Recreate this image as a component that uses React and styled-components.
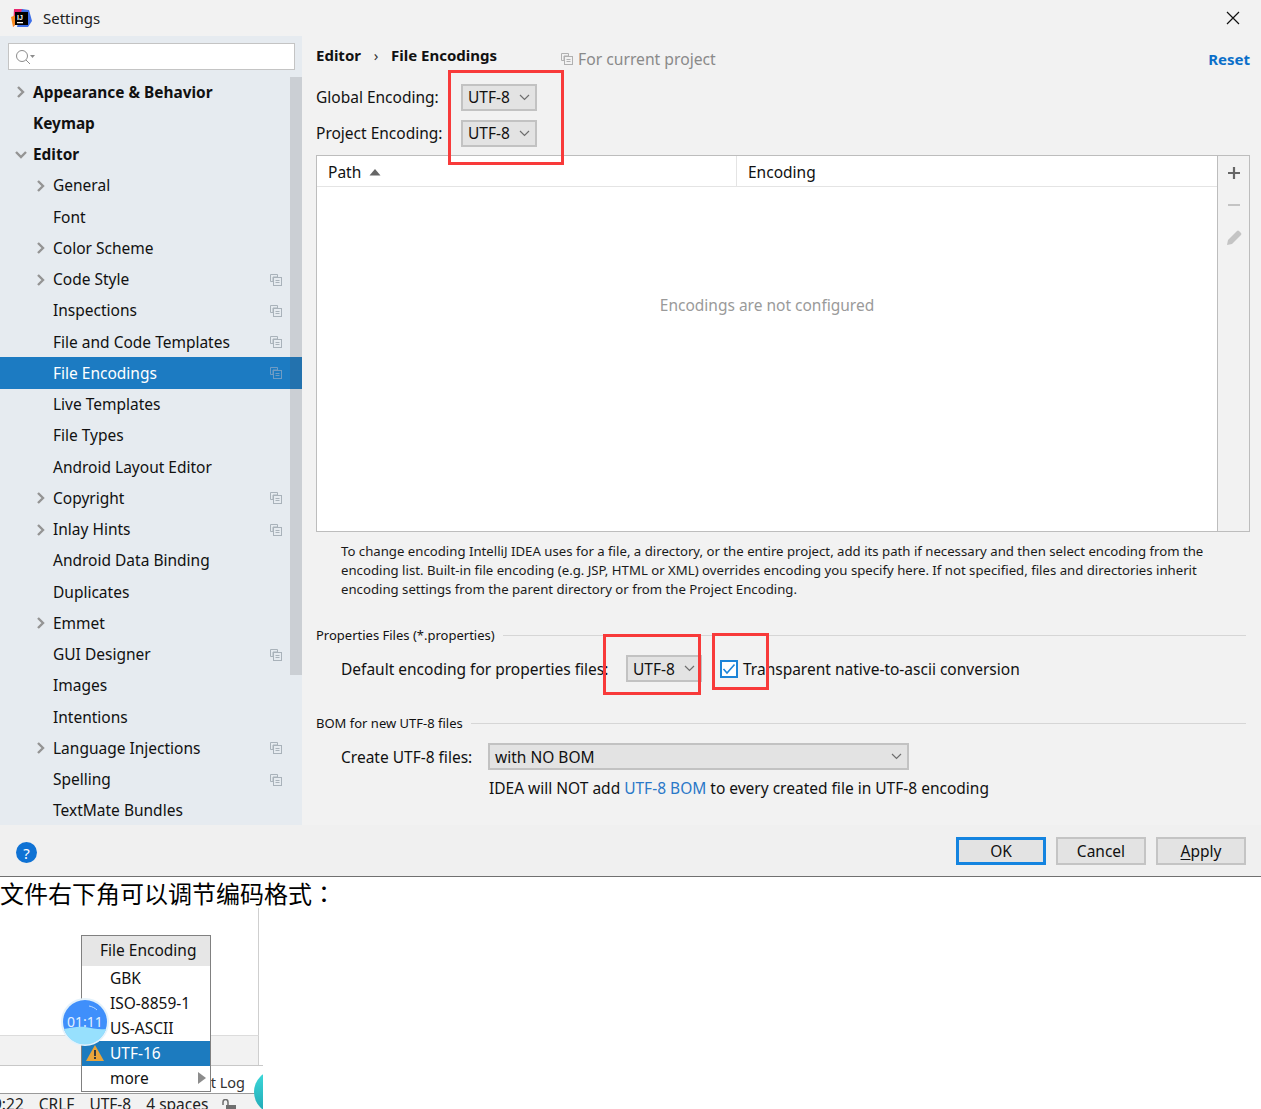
import React from "react";
import styled, { createGlobalStyle } from "styled-components";

const Global = createGlobalStyle`
  html, body {
    margin: 0;
    padding: 0;
    background: #fff;
    overflow: hidden;
  }
  #root {
    width: 1261px;
    height: 1109px;
    overflow: hidden;
  }
  * { box-sizing: border-box; }
`;

const Page = styled.div`
  position: relative;
  width: 1261px;
  height: 1109px;
  font-family: "Noto Sans", "Noto Sans CJK SC", sans-serif;
  font-size: 15.5px;
  color: #111;
`;

const Dialog = styled.div`
  display: flex;
  flex-direction: column;
  height: 877px;
  background: #f2f2f2;
  border-bottom: 1px solid #707070;
`;

const TitleBar = styled.div`
  height: 36px;
  display: flex;
  align-items: center;
  padding: 0 21px 0 11px;
  gap: 11px;
  font-size: 15px;
`;

const TitleText = styled.span`
  flex: 1;
  color: #222;
`;

const Body = styled.div`
  height: 789px;
  display: flex;
`;

const Sidebar = styled.div`
  position: relative;
  width: 302px;
  background: #e6ebf0;
  overflow: hidden;
`;

const SearchBox = styled.div`
  margin: 7px 7px 6px 8px;
  height: 27px;
  background: #fff;
  border: 1px solid #c4c4c4;
  display: flex;
  align-items: center;
  padding-left: 6px;
`;

const Scroll = styled.div`
  position: absolute;
  top: 41px;
  right: 0;
  width: 12px;
  height: 598px;
  background: rgba(70, 70, 80, 0.17);
`;

const TreeRow = styled.div`
  height: 31.25px;
  display: flex;
  align-items: center;
  position: relative;
  padding-left: ${(p) => (p.$level ? 53 : 33)}px;
  padding-top: ${(p) => (p.$level ? 0 : 1)}px;
  font-weight: ${(p) => (p.$level ? 400 : 700)};
  font-size: ${(p) => (p.$level ? 15.5 : 15.4)}px;
  background: ${(p) => (p.$active ? "#1c7bc2" : "transparent")};
  color: ${(p) => (p.$active ? "#fff" : "#111")};
`;

const TreeArrow = styled.svg`
  position: absolute;
  left: ${(p) => (p.$level ? 35 : 15)}px;
  top: 9px;
  width: 12px;
  height: 14px;
`;

const RowCopy = styled.span`
  position: absolute;
  left: 270px;
  top: 10px;
  display: flex;
`;

const Main = styled.div`
  flex: 1;
  padding: 0 11px 0 14px;
  display: flex;
  flex-direction: column;
`;

const Crumbs = styled.div`
  display: flex;
  align-items: center;
  height: 43px;
  padding-bottom: 5px;
  font-size: 15px;
`;

const Crumb = styled.span`
  font-weight: 700;
`;

const CrumbSep = styled.span`
  width: 30px;
  text-align: center;
  color: #333;
`;

const ProjectHint = styled.span`
  margin-left: 64px;
  display: flex;
  align-items: center;
  gap: 5px;
  color: #8a8a8a;
  padding-top: 8px;
  font-size: 15.7px;
`;

const ResetLink = styled.a`
  margin-left: auto;
  color: #0b6fc9;
  font-weight: 700;
  padding-top: 8px;
`;

const EncRow = styled.div`
  display: flex;
  align-items: center;
  height: 36px;
`;

const EncLabel = styled.span`
  width: 145px;
`;

const Combo = styled.div`
  width: ${(p) => p.$w || 76}px;
  height: 27px;
  flex: none;
  background: #e3e3e3;
  border: 2px solid #c2c2c2;
  display: flex;
  align-items: center;
  justify-content: space-between;
  padding: 0 5px 0 5px;
`;

const TablePanel = styled.div`
  margin-top: 4px;
  height: 377px;
  flex: none;
  display: flex;
  border: 1px solid #bdbdbd;
`;

const TableArea = styled.div`
  flex: 1;
  background: #fff;
  display: flex;
  flex-direction: column;
  border-right: 1px solid #bdbdbd;
`;

const TableHead = styled.div`
  height: 31px;
  flex: none;
  display: flex;
  border-bottom: 1px solid #e4e4e4;
`;

const HeadCell = styled.div`
  width: ${(p) => (p.$w ? `${p.$w}px` : "auto")};
  flex: ${(p) => (p.$w ? "none" : 1)};
  padding: 2px 11px 0;
  display: flex;
  align-items: center;
  gap: 8px;
  ${(p) => p.$w && "border-right: 1px solid #e4e4e4;"}
`;

const EmptyNote = styled.div`
  flex: 1;
  display: flex;
  align-items: center;
  justify-content: center;
  color: #9a9a9a;
  padding-bottom: 108px;
`;

const ToolStrip = styled.div`
  width: 31px;
  flex: none;
  display: flex;
  flex-direction: column;
  align-items: center;
  padding-top: 10px;
  gap: 17px;
`;

const HelpText = styled.p`
  margin: 10px 35px 0 25px;
  font-size: 13.2px;
  line-height: 19px;
  color: #1a1a1a;
`;

const GroupTitle = styled.div`
  display: flex;
  align-items: center;
  gap: 8px;
  font-size: 13px;
  margin-top: ${(p) => p.$top}px;
  height: 20px;
  padding-right: 4px;
  &::after {
    content: "";
    flex: 1;
    height: 1px;
    background: #d6d6d6;
  }
`;

const FieldRow = styled.div`
  display: flex;
  align-items: center;
  padding-left: 25px;
  height: 27px;
  margin-top: ${(p) => p.$top}px;
`;

const FieldLabel = styled.span`
  width: ${(p) => p.$w}px;
  flex: none;
  white-space: nowrap;
`;

const CheckBox = styled.span`
  width: 18px;
  height: 18px;
  flex: none;
  background: #fff;
  border: 2px solid #1c84d8;
  display: flex;
  align-items: center;
  justify-content: center;
  margin: 0 5px 0 18px;
`;

const NoteRow = styled.div`
  padding-left: 173px;
  margin-top: 5px;
  height: 26px;
  display: flex;
  align-items: center;
`;

const BlueText = styled.span`
  color: #2a78c8;
  margin: 0 4px;
`;

const Footer = styled.div`
  flex: 1;
  display: flex;
  align-items: center;
  gap: 10px;
  padding: 0 15px 0 16px;
  background: #f0f0f0;
`;

const HelpDot = styled.span`
  width: 21px;
  height: 21px;
  border-radius: 50%;
  background: #0f72d4;
  color: #fff;
  font-size: 15px;
  display: flex;
  align-items: center;
  justify-content: center;
  margin: 4px auto 0 0;
`;

const DlgButton = styled.button`
  width: 90px;
  height: 28px;
  padding: 0;
  font: inherit;
  color: #111;
  background: #e3e3e3;
  border: ${(p) => (p.$primary ? "3px solid #1484e0" : "2px solid #c4c4c4")};
  u { text-underline-offset: 2px; }
`;

const Note = styled.div`
  height: 31px;
  font-family: "Noto Sans CJK SC", sans-serif;
  font-size: 24px;
  line-height: 32px;
  color: #000;
  white-space: nowrap;
`;

const NoteColon = styled.span`
  font-family: "Noto Sans CJK TC", sans-serif;
`;

const Shot = styled.div`
  position: relative;
  width: 263px;
  height: 201px;
  overflow: hidden;
  display: flex;
  flex-direction: column;
`;

const ShotEditor = styled.div`
  height: 127px;
  flex: none;
  width: 259px;
  border-right: 1px solid #cfcfcf;
`;

const ShotBand = styled.div`
  height: 30px;
  flex: none;
  width: 259px;
  background: #f2f2f2;
  border-top: 1px solid #dcdcdc;
  border-right: 1px solid #cfcfcf;
`;

const ShotLog = styled.div`
  height: 29px;
  flex: none;
  border-top: 1px solid #c8c8c8;
  border-bottom: 1px solid #9a9a9a;
  padding: 3px 18px 0 0;
  text-align: right;
  font-size: 14.5px;
  line-height: 26px;
  color: #333;
`;

const ShotStatus = styled.div`
  flex: 1;
  background: #f2f2f2;
  display: flex;
  align-items: flex-start;
  gap: 15px;
  line-height: 21px;
  margin-left: -7px;
  color: #222;
  white-space: nowrap;
`;

const LockIcon = styled.svg`
  margin: 5px 0 0 -1px;
  flex: none;
`;

const EncPopup = styled.div`
  position: absolute;
  left: 81px;
  top: 27px;
  width: 130px;
  height: 157px;
  background: #fff;
  border: 1px solid #808080;
`;

const PopupHead = styled.div`
  height: 30px;
  background: #e6e6e6;
  padding: 0 0 2px 18px;
  display: flex;
  align-items: center;
`;

const PopupItem = styled.div`
  height: 25px;
  padding: 0 4px 2px 28px;
  display: flex;
  align-items: center;
  justify-content: space-between;
  position: relative;
  background: ${(p) => (p.$active ? "#1c7bbf" : "transparent")};
  color: ${(p) => (p.$active ? "#fff" : "#111")};
`;

const WarnIcon = styled.svg`
  position: absolute;
  left: 4px;
  top: 4px;
`;

const Bubble = styled.div`
  position: absolute;
  isolation: isolate;
  left: 61px;
  top: 90px;
  width: 48px;
  height: 48px;
  color: #e2efff;
  font-size: 14px;
  display: flex;
  align-items: center;
  justify-content: center;
  padding-bottom: 2px;
`;

const BubbleArt = styled.svg`
  position: absolute;
  inset: 0;
  z-index: -1;
`;

const TealDot = styled.div`
  position: absolute;
  left: 254px;
  top: 162px;
  width: 44px;
  height: 44px;
  border-radius: 50%;
  background: linear-gradient(#3fdcdc, #1fa6b4);
`;

const RedMark = styled.div`
  position: absolute;
  left: ${(p) => p.$x}px;
  top: ${(p) => p.$y}px;
  width: ${(p) => p.$w}px;
  height: ${(p) => p.$h}px;
  border: 3px solid #f83a3a;
  pointer-events: none;
`;

const tree = [
  { name: "Appearance & Behavior", arrow: "right" },
  { name: "Keymap" },
  { name: "Editor", arrow: "down" },
  { name: "General", level: 1, arrow: "right" },
  { name: "Font", level: 1 },
  { name: "Color Scheme", level: 1, arrow: "right" },
  { name: "Code Style", level: 1, arrow: "right", copy: true },
  { name: "Inspections", level: 1, copy: true },
  { name: "File and Code Templates", level: 1, copy: true },
  { name: "File Encodings", level: 1, copy: true, active: true },
  { name: "Live Templates", level: 1 },
  { name: "File Types", level: 1 },
  { name: "Android Layout Editor", level: 1 },
  { name: "Copyright", level: 1, arrow: "right", copy: true },
  { name: "Inlay Hints", level: 1, arrow: "right", copy: true },
  { name: "Android Data Binding", level: 1 },
  { name: "Duplicates", level: 1 },
  { name: "Emmet", level: 1, arrow: "right" },
  { name: "GUI Designer", level: 1, copy: true },
  { name: "Images", level: 1 },
  { name: "Intentions", level: 1 },
  { name: "Language Injections", level: 1, arrow: "right", copy: true },
  { name: "Spelling", level: 1, copy: true },
  { name: "TextMate Bundles", level: 1 },
];

const Chevron = ({ color = "#6e6e6e" }) => (
  <svg width="11" height="7" viewBox="0 0 11 7">
    <path d="M1 1l4.5 4.5L10 1" fill="none" stroke={color} strokeWidth="1.2" />
  </svg>
);

const CopyIcon = ({ color = "#a9b2ba" }) => (
  <svg width="12" height="12" viewBox="0 0 12 12">
    <path d="M.5.5h7v2.5H3v4.5H.5z" fill="none" stroke={color} />
    <rect x="3.5" y="3.5" width="8" height="8" fill="none" stroke={color} />
    <path d="M5.5 6.5h4M5.5 8.5h4" stroke={color} />
  </svg>
);

const AppLogo = () => (
  <svg width="21" height="21" viewBox="0 0 21 21">
    <path d="M3 1h9L8 12 2 19z" fill="#e8266f" />
    <path d="M11 1l7 1 3 11-4 6H6z" fill="#3d6fe8" />
    <path d="M0 9l5-2v9l-3 3z" fill="#f98b22" />
    <rect x="4" y="4" width="13" height="13" fill="#000" />
    <rect x="6" y="14" width="6" height="1.3" fill="#fff" />
    <text x="6" y="12" fontSize="7" fontWeight="700" fill="#fff" fontFamily="Liberation Sans">IJ</text>
  </svg>
);

const App = () => (
  <Page>
    <Global />
    <Dialog>
      <TitleBar>
        <AppLogo />
        <TitleText>Settings</TitleText>
        <svg width="14" height="14" viewBox="0 0 14 14">
          <path d="M1 1l12 12M13 1L1 13" stroke="#111" strokeWidth="1.2" />
        </svg>
      </TitleBar>
      <Body>
        <Sidebar>
          <SearchBox>
            <svg width="22" height="16" viewBox="0 0 22 16">
              <circle cx="7" cy="7" r="5.5" fill="none" stroke="#8c8c8c" />
              <path d="M11 11l4 4" stroke="#8c8c8c" />
              <path d="M15 6h5l-2.5 3z" fill="#8c8c8c" />
            </svg>
          </SearchBox>
          {tree.map((row) => (
            <TreeRow key={row.name} $level={row.level} $active={row.active}>
              {row.arrow && (
                <TreeArrow $level={row.level} viewBox="0 0 12 14">
                  {row.arrow === "right" ? (
                    <path d="M3 2l5 5-5 5" fill="none" stroke="#949494" strokeWidth="2.4" />
                  ) : (
                    <path d="M1 4l5 5 5-5" fill="none" stroke="#949494" strokeWidth="2.4" />
                  )}
                </TreeArrow>
              )}
              {row.name}
              {row.copy && (
                <RowCopy>
                  <CopyIcon color={row.active ? "#6f9cc4" : "#a9b2ba"} />
                </RowCopy>
              )}
            </TreeRow>
          ))}
          <Scroll />
        </Sidebar>
        <Main>
          <Crumbs>
            <Crumb>Editor</Crumb>
            <CrumbSep>›</CrumbSep>
            <Crumb>File Encodings</Crumb>
            <ProjectHint>
              <CopyIcon color="#b0b0b0" />
              For current project
            </ProjectHint>
            <ResetLink>Reset</ResetLink>
          </Crumbs>
          <EncRow>
            <EncLabel>Global Encoding:</EncLabel>
            <Combo>
              UTF-8
              <Chevron />
            </Combo>
          </EncRow>
          <EncRow>
            <EncLabel>Project Encoding:</EncLabel>
            <Combo>
              UTF-8
              <Chevron />
            </Combo>
          </EncRow>
          <TablePanel>
            <TableArea>
              <TableHead>
                <HeadCell $w={420}>
                  Path
                  <svg width="12" height="7" viewBox="0 0 12 7">
                    <path d="M6 0l5.5 6.5H.5z" fill="#666" />
                  </svg>
                </HeadCell>
                <HeadCell>Encoding</HeadCell>
              </TableHead>
              <EmptyNote>Encodings are not configured</EmptyNote>
            </TableArea>
            <ToolStrip>
              <svg width="14" height="14" viewBox="0 0 14 14">
                <path d="M7 1v12M1 7h12" stroke="#666" strokeWidth="2.2" />
              </svg>
              <svg width="14" height="16" viewBox="0 0 14 16">
                <path d="M1 8h12" stroke="#c4c4c4" strokeWidth="2" />
              </svg>
              <svg width="18" height="16" viewBox="0 0 18 16">
                <path d="M2 15l1-5L12 1a1.5 1.5 0 012 0l2 2a1.5 1.5 0 010 2l-9 9z" fill="#c4c4c4" />
              </svg>
            </ToolStrip>
          </TablePanel>
          <HelpText>
            To change encoding IntelliJ IDEA uses for a file, a directory, or the entire project, add its path if necessary and then select encoding from the encoding list. Built-in file encoding (e.g. JSP, HTML or XML) overrides encoding you specify here. If not specified, files and directories inherit encoding settings from the parent directory or from the Project Encoding.
          </HelpText>
          <GroupTitle $top={26}>Properties Files (*.properties)</GroupTitle>
          <FieldRow $top={10}>
            <FieldLabel $w={285}>Default encoding for properties files:</FieldLabel>
            <Combo>
              UTF-8
              <Chevron />
            </Combo>
            <CheckBox>
              <svg width="14" height="12" viewBox="0 0 14 12">
                <path d="M1.5 6l3.5 4 7.5-8.5" fill="none" stroke="#1c84d8" strokeWidth="1.6" />
              </svg>
            </CheckBox>
            Transparent native-to-ascii conversion
          </FieldRow>
          <GroupTitle $top={31}>BOM for new UTF-8 files</GroupTitle>
          <FieldRow $top={10}>
            <FieldLabel $w={147}>Create UTF-8 files:</FieldLabel>
            <Combo $w={421}>
              with NO BOM
              <Chevron />
            </Combo>
          </FieldRow>
          <NoteRow>
            IDEA will NOT add
            <BlueText>UTF-8 BOM</BlueText>
            to every created file in UTF-8 encoding
          </NoteRow>
        </Main>
      </Body>
      <Footer>
        <HelpDot>?</HelpDot>
        <DlgButton $primary>OK</DlgButton>
        <DlgButton>Cancel</DlgButton>
        <DlgButton>
          <u>A</u>pply
        </DlgButton>
      </Footer>
    </Dialog>
    <Note>
      文件右下角可以调节编码格式<NoteColon>：</NoteColon>
    </Note>
    <Shot>
      <ShotEditor />
      <ShotBand />
      <ShotLog>Event Log</ShotLog>
      <ShotStatus>
        <span>9:22</span>
        <span>CRLF</span>
        <span>UTF-8</span>
        <span>4 spaces</span>
        <LockIcon width="14" height="12" viewBox="0 0 14 12">
          <path d="M1 6V3a2.5 2.5 0 015 0v3" fill="none" stroke="#6e6e6e" strokeWidth="1.5" />
          <rect x="4" y="6" width="10" height="6" fill="#6e6e6e" />
        </LockIcon>
      </ShotStatus>
      <EncPopup>
        <PopupHead>File Encoding</PopupHead>
        <PopupItem>GBK</PopupItem>
        <PopupItem>ISO-8859-1</PopupItem>
        <PopupItem>US-ASCII</PopupItem>
        <PopupItem $active>
          <WarnIcon width="18" height="16" viewBox="0 0 18 16">
            <path d="M9 0l9 16H0z" fill="#eaa53a" />
            <path d="M8 5h2v6H8zM8 12h2v2H8z" fill="#3a3a3a" />
          </WarnIcon>
          UTF-16
        </PopupItem>
        <PopupItem>
          more
          <svg width="8" height="12" viewBox="0 0 8 12">
            <path d="M0 0l8 6-8 6z" fill="#8c8c8c" />
          </svg>
        </PopupItem>
      </EncPopup>
      <Bubble>
        <BubbleArt width="48" height="48" viewBox="0 0 48 48">
          <circle cx="24" cy="24" r="24" fill="#e4f2fb" />
          <circle cx="24" cy="24" r="22" fill="#3f8ffb" />
          <path d="M3 31c7-1 14-3 21-2s14 3 21 2A22 22 0 013 31z" fill="#97e0fd" />
          <path d="M28 8c3 .5 6 2 8 4" fill="none" stroke="#bcdcff" strokeWidth="1" />
        </BubbleArt>
        01:11
      </Bubble>
      <TealDot />
    </Shot>
    <RedMark $x={448} $y={70} $w={116} $h={95} />
    <RedMark $x={603} $y={634} $w={98} $h={61} />
    <RedMark $x={712} $y={633} $w={57} $h={57} />
  </Page>
);

export default App;
